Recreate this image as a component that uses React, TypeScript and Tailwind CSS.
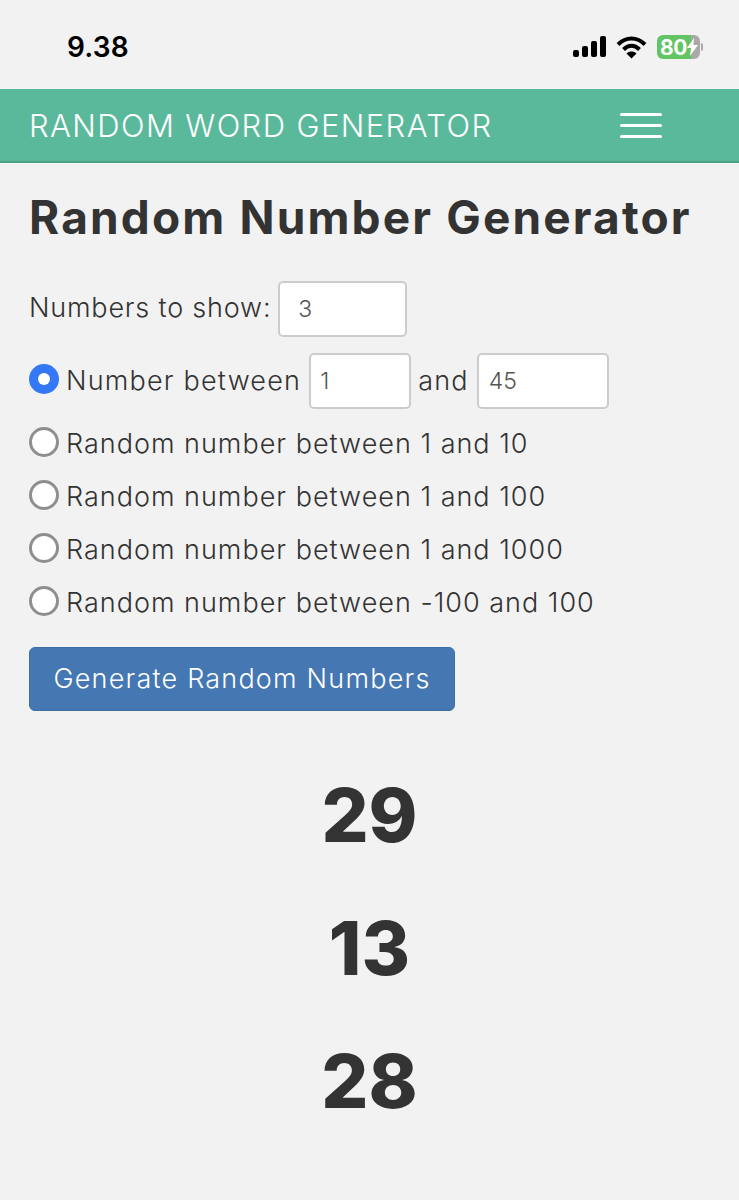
const font = "font-['Inter','Noto_Sans',sans-serif]";

const radioOptions = [
  "Random number between 1 and 10",
  "Random number between 1 and 100",
  "Random number between 1 and 1000",
  "Random number between -100 and 100",
];

const results = ["29", "13", "28"];

function StatusBar() {
  return (
    <div className="flex h-[89px] items-center justify-between pl-[67px] pr-[36px] pt-[5px]">
      <span className="font-['Inter',sans-serif] text-[28px] font-semibold tracking-[0.2px] text-black">9.38</span>
      <div className="flex items-center gap-[10px]">
        <svg width="33" height="22" viewBox="0 0 33 22" fill="black">
          <rect x="0" y="14" width="6" height="7" rx="2" />
          <rect x="9" y="10" width="6" height="11" rx="2" />
          <rect x="18" y="5" width="6" height="16" rx="2" />
          <rect x="27" y="0" width="6" height="21" rx="2" />
        </svg>
        <svg width="31" height="23" viewBox="0 0 31 23" fill="none" stroke="black" strokeWidth="4">
          <path d="M2 8.500C10 .5 21 .5 29 8.500" />
          <path d="M7.500 13.500C12.500 8.500 18.500 8.500 23.500 13.500" />
          <path d="M15.500 22.500l-5-5c3-2.600 7-2.600 10 0z" fill="black" stroke="none" />
        </svg>
        <div className="flex items-center gap-[1px]">
          <div className="flex h-6 w-[43px] items-center overflow-hidden rounded-[6px] bg-[linear-gradient(90deg,#62c462_0_78%,#a9a9a9_78%)] pl-[3px] text-[21px] font-bold leading-none text-white">
            <span className="font-['Inter',sans-serif] tracking-[-0.5px]">80</span>
            <svg width="11" height="18" viewBox="0 0 11 18" fill="white">
              <path d="M7 0L0 10h4l-1 8 8-11H6.500z" />
            </svg>
          </div>
          <div className="h-2 w-[2px] rounded-r-sm bg-[#a9a9a9]" />
        </div>
      </div>
    </div>
  );
}

function NavBar() {
  return (
    <div className="flex h-[74px] items-center justify-between border-b-2 border-[#4ea288] bg-[#5bb99b] pl-[29px] pr-[77px]">
      <span className="pt-[2px] text-[31px] font-light tracking-[1.4px] text-white">RANDOM WORD GENERATOR</span>
      <div className="flex w-[42px] flex-col gap-[8px]">
        <div className="h-[3px] rounded-full bg-white" />
        <div className="h-[3px] rounded-full bg-white" />
        <div className="h-[3px] rounded-full bg-white" />
      </div>
    </div>
  );
}

function Radio({ checked }: { checked?: boolean }) {
  return checked ? (
    <div className="flex h-[30px] w-[30px] shrink-0 items-center justify-center rounded-full bg-[#3478f6]">
      <div className="h-3 w-3 rounded-full bg-white" />
    </div>
  ) : (
    <div className="h-[30px] w-[30px] shrink-0 rounded-full border-[3px] border-[#8e8e8e] bg-white" />
  );
}

export default function App() {
  return (
    <div className={`${font} min-h-[1200px] bg-[#f2f2f2] text-[#333]`}>
      <StatusBar />
      <NavBar />
      <div className="px-[29px]">
        <h1 className="mt-[27px] whitespace-nowrap text-[46px] font-bold leading-[54px] tracking-[2.15px] text-[#333]">
          Random Number Generator
        </h1>

        <div className="mt-[37px] flex items-center gap-[7px] text-[27px] font-light tracking-[0.8px]">
          <span className="pb-[1px]">Numbers to show:</span>
          <div className="flex h-[56px] w-[129px] items-center rounded-[5px] border-2 border-[#ccc] bg-white pl-[18px] text-[23px] tracking-normal text-[#555]">
            3
          </div>
        </div>

        <div className="mt-4 flex items-center text-[27px] font-light tracking-[1.2px]">
          <div className="pb-1">
            <Radio checked />
          </div>
          <span className="ml-[7px]">Number between</span>
          <div className="ml-2 flex h-[56px] w-[102px] items-center rounded-[5px] border-2 border-[#ccc] bg-white pl-[9px] text-[23px] tracking-normal text-[#555]">
            1
          </div>
          <span className="ml-[7px]">and</span>
          <div className="ml-2 flex h-[56px] w-[132px] items-center rounded-[5px] border-2 border-[#ccc] bg-white pl-[10px] text-[23px] tracking-normal text-[#555]">
            45
          </div>
        </div>

        <div className="mt-[18px] flex flex-col gap-[23px]">
          {radioOptions.map((label) => (
            <div key={label} className="flex h-[30px] items-center gap-[7px] whitespace-nowrap text-[27px] font-light tracking-[1px]">
              <Radio />
              <span className="pt-[4px]">{label}</span>
            </div>
          ))}
        </div>

        <button className="mt-[31px] h-[64px] w-[426px] rounded-[6px] border border-[#3a6ea5] bg-[#4577b2] text-[27px] font-light tracking-[1.2px] text-white">
          Generate Random Numbers
        </button>

        <div className="mt-[53px] flex flex-col items-center gap-[30px]">
          {results.map((n) => (
            <div key={n} className="text-[74px] font-extrabold leading-[103px] text-[#333]">
              {n}
            </div>
          ))}
        </div>
      </div>
    </div>
  );
}
